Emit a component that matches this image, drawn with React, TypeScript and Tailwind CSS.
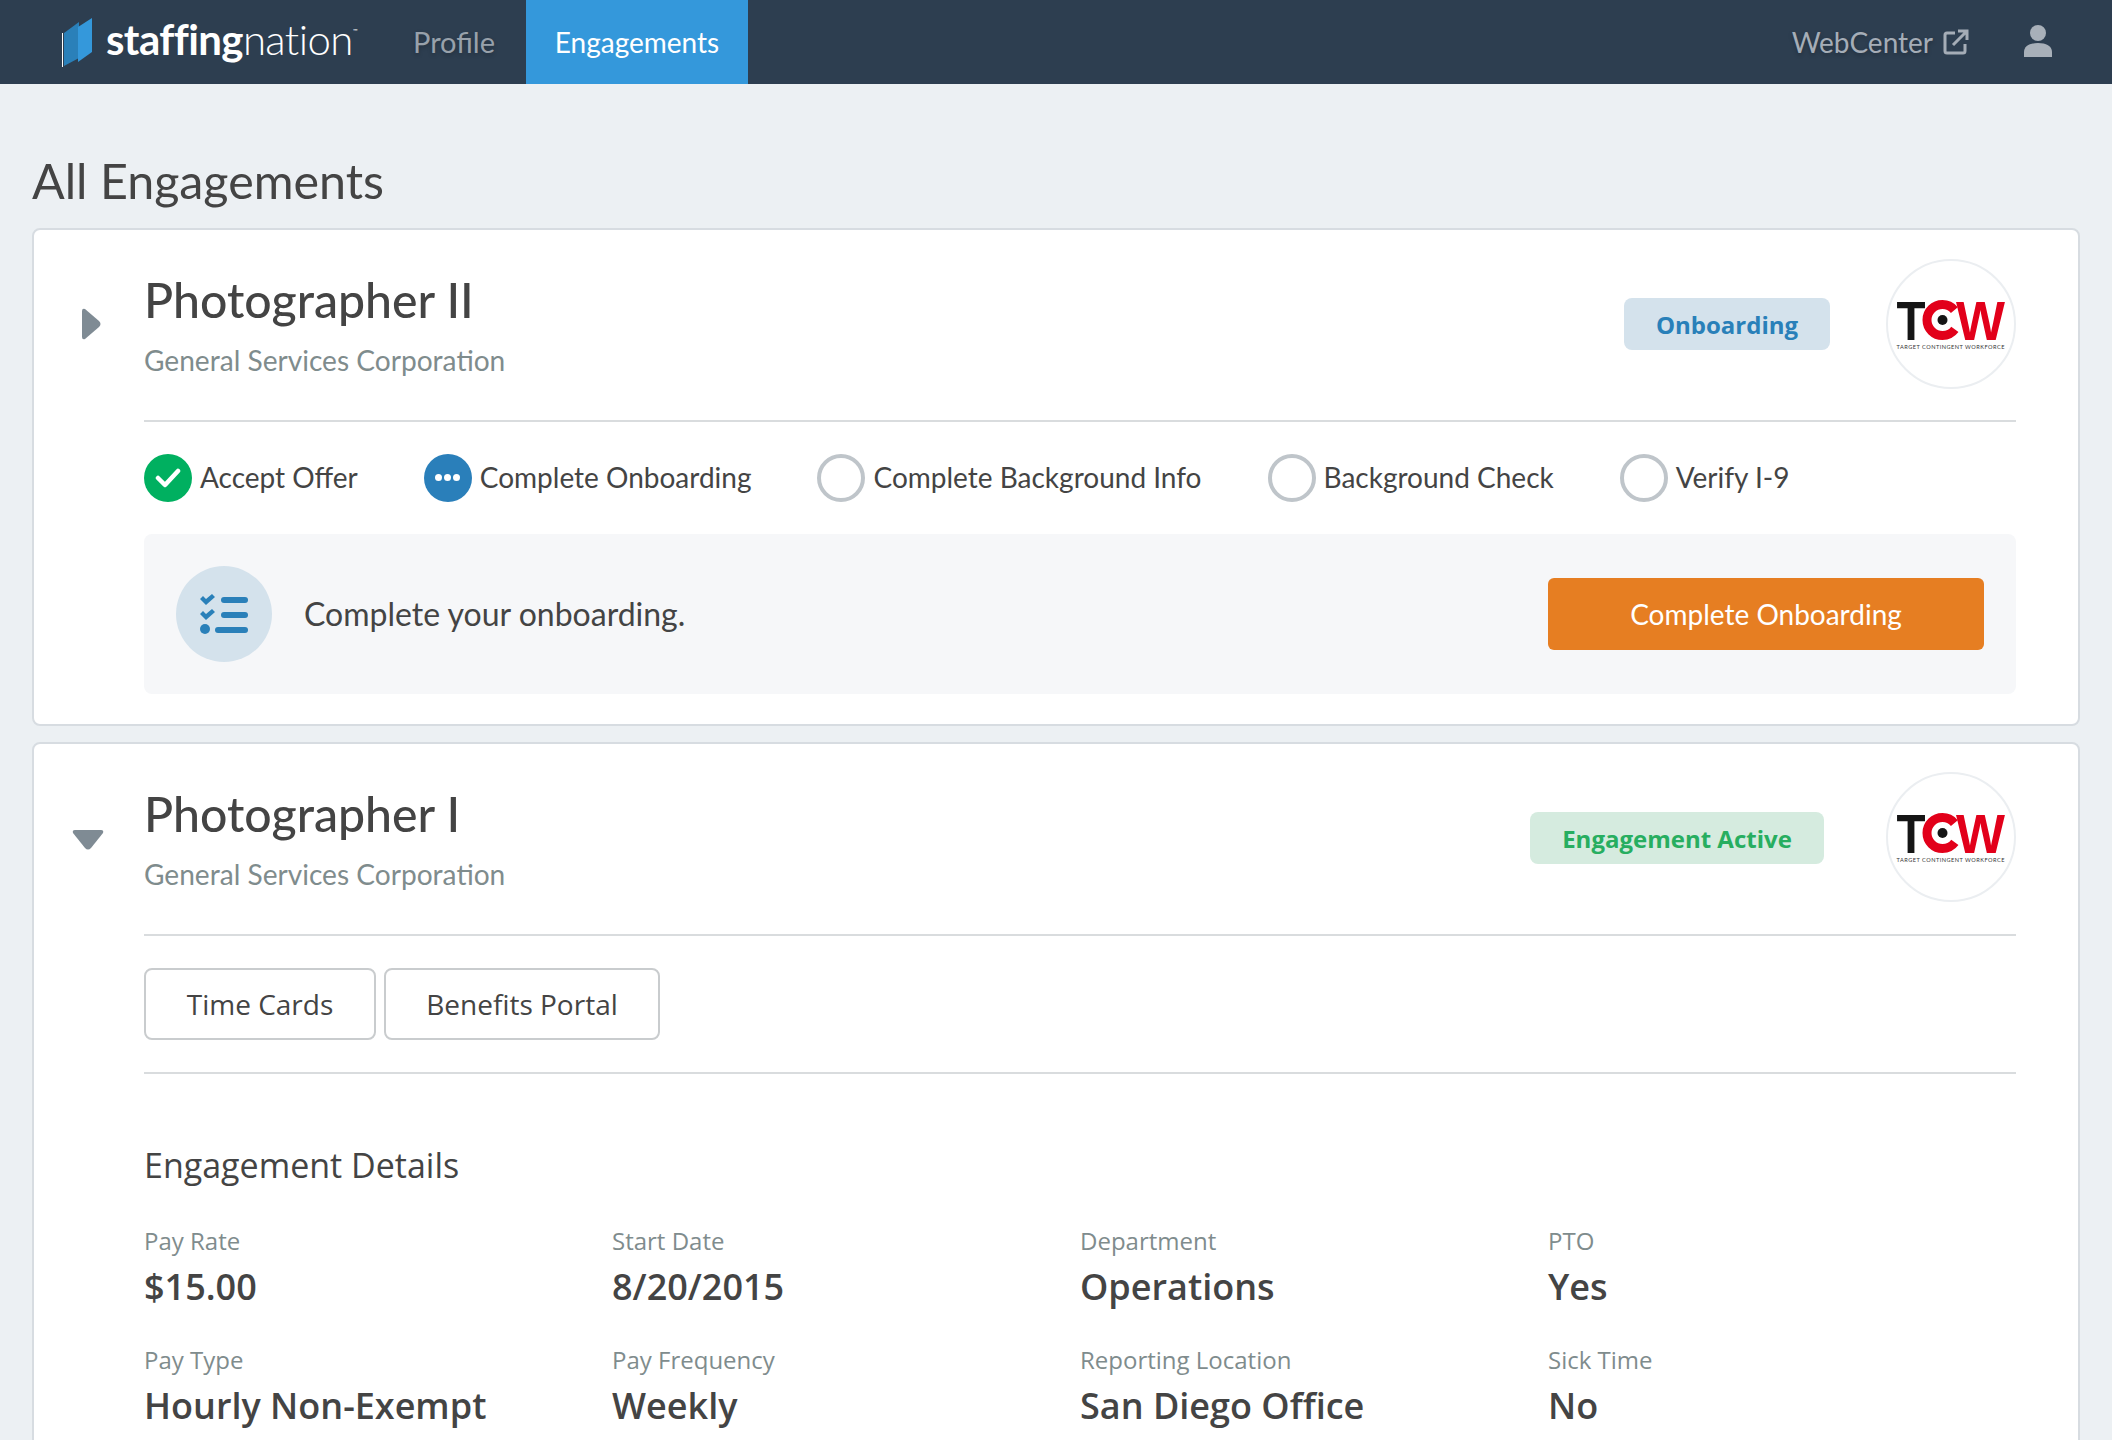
import React from "react";

const LATO = "font-['Lato',sans-serif]";
const OPEN = "font-['Open_Sans',sans-serif]";

function BrandMark() {
  return (
    <svg width="32" height="50" viewBox="0 0 32 50" className="shrink-0 mt-[2px]">
      <path d="M1.5 15 L1.5 49" stroke="#fff" strokeWidth="1" />
      <path d="M3 15 L18 4 L18 40 L3 48 Z" fill="#2a80b9" />
      <path d="M17 9 L31 0 L31 34 L17 44 Z" fill="#3498db" />
    </svg>
  );
}

function ExternalIcon() {
  return (
    <svg width="26" height="26" viewBox="0 0 26 26" fill="none" stroke="#a5adb7" strokeWidth="3">
      <path d="M12 4 H4 Q2 4 2 6 V22 Q2 24 4 24 H20 Q22 24 22 22 V15" />
      <path d="M10 16 L23 3 M15 2 H24 V11" />
    </svg>
  );
}

function UserIcon() {
  return (
    <svg width="28" height="32" viewBox="0 0 28 32" fill="#a8b0b9">
      <circle cx="14" cy="8" r="8" />
      <path d="M0 32 V27 C0 21 6 18 14 18 C22 18 28 21 28 27 V32 Z" />
    </svg>
  );
}

function TcwLogo() {
  return (
    <div className="w-[130px] h-[130px] rounded-full border-2 border-[#ebeef1] bg-white shrink-0 flex items-center justify-center">
      <svg width="114" height="84" viewBox="0 -14 114 84">
        <text x="2.5" y="44" fontFamily="Liberation Sans" fontWeight="700" fontSize="55" fill="#151515" textLength="29" lengthAdjust="spacingAndGlyphs">T</text>
        <circle cx="48.5" cy="24" r="15.5" fill="none" stroke="#e2001a" strokeWidth="9" strokeDasharray="76 21.4" strokeDashoffset="-10" />
        <circle cx="48.5" cy="24" r="5" fill="#151515" />
        <text x="62" y="44" fontFamily="Liberation Sans" fontWeight="700" fontSize="55" fill="#e2001a" textLength="49" lengthAdjust="spacingAndGlyphs">W</text>
        <text x="2.5" y="53" fontFamily="Lato" fontSize="5.6" fill="#333" textLength="108">TARGET CONTINGENT WORKFORCE</text>
      </svg>
    </div>
  );
}

function StepIcon({ state }: { state: "done" | "current" | "todo" }) {
  if (state === "done") {
    return (
      <span className="w-12 h-12 rounded-full bg-[#00b060] flex items-center justify-center shrink-0">
        <svg width="26" height="22" viewBox="0 0 26 22" fill="none" stroke="#fff" strokeWidth="4.5" strokeLinecap="round" strokeLinejoin="round">
          <path d="M3 11 L10 18 L23 4" />
        </svg>
      </span>
    );
  }
  if (state === "current") {
    return (
      <span className="w-12 h-12 rounded-full bg-[#2a7fba] flex items-center justify-center gap-[2px] shrink-0">
        <i className="w-[7px] h-[7px] rounded-full bg-white" />
        <i className="w-[7px] h-[7px] rounded-full bg-white" />
        <i className="w-[7px] h-[7px] rounded-full bg-white" />
      </span>
    );
  }
  return <span className="w-12 h-12 rounded-full border-4 border-[#bfc5ca] shrink-0" />;
}

function ChecklistIcon() {
  return (
    <svg width="48" height="40" viewBox="0 0 48 40" fill="#2a80b9">
      <path d="M0 5 L3 2 L6 5 L12 0 L15 3 L6 11 Z" />
      <rect x="21" y="3" width="27" height="6" rx="3" />
      <path d="M0 20 L3 17 L6 20 L12 15 L15 18 L6 26 Z" />
      <rect x="21" y="18" width="27" height="6" rx="3" />
      <circle cx="5" cy="35" r="5" />
      <rect x="15" y="33" width="33" height="6" rx="3" />
    </svg>
  );
}

function Detail({ label, value }: { label: string; value: string }) {
  return (
    <div className={OPEN}>
      <div className="text-[24px] leading-[32px] text-[#7f8c8d]">{label}</div>
      <div className="text-[36px] leading-[48px] font-semibold text-[#444] mt-[6px]">{value}</div>
    </div>
  );
}

const steps: { label: string; state: "done" | "current" | "todo" }[] = [
  { label: "Accept Offer", state: "done" },
  { label: "Complete Onboarding", state: "current" },
  { label: "Complete Background Info", state: "todo" },
  { label: "Background Check", state: "todo" },
  { label: "Verify I-9", state: "todo" },
];

const details = [
  ["Pay Rate", "$15.00"],
  ["Start Date", "8/20/2015"],
  ["Department", "Operations"],
  ["PTO", "Yes"],
  ["Pay Type", "Hourly Non-Exempt"],
  ["Pay Frequency", "Weekly"],
  ["Reporting Location", "San Diego Office"],
  ["Sick Time", "No"],
];

export default function App() {
  return (
    <div className="h-[1440px] overflow-hidden bg-[#ecf0f3]">
      <header className="h-[84px] bg-[#2d3e50] flex items-stretch pl-[61px] pr-[60px]">
        <div className="flex items-center w-[352px]">
          <BrandMark />
          <span className={`${LATO} ml-[13px] text-[42px] leading-none text-white tracking-[-0.6px] mb-[6px] whitespace-nowrap`}>
            <span className="font-bold">staffing</span>
            <span className="font-light">nation</span>
            <span className="text-[6px] font-normal tracking-normal align-[22px]">™</span>
          </span>
        </div>
        <a className={`${LATO} flex items-center text-[29px] text-[#98a1ab] [text-shadow:0_2px_4px_rgba(0,0,0,0.25)]`}>Profile</a>
        <a className={`${LATO} ml-[31px] w-[222px] flex items-center justify-center bg-[#3498db] text-[28px] text-white`}>Engagements</a>
        <div className="ml-auto flex items-center">
          <span className={`${LATO} text-[28px] text-[#a5adb7] [text-shadow:0_2px_4px_rgba(0,0,0,0.25)]`}>WebCenter</span>
          <span className="ml-[10px]"><ExternalIcon /></span>
          <span className="ml-[55px] mb-[2px]"><UserIcon /></span>
        </div>
      </header>

      <main className="px-8">
        <h1 className={`${LATO} text-[48.4px] leading-[60px] text-[#444] pt-[66px] h-[144px]`}>All Engagements</h1>

        <section className="bg-white rounded-lg border-2 border-[#d7dce1] h-[498px] flex">
          <div className="w-[110px] shrink-0 pl-[46px] pt-[78px]">
            <svg width="22" height="32" viewBox="0 0 22 32" fill="#7f8b94">
              <path d="M2 3 Q2 0 5 1 L19 13 Q22 16 19 19 L5 31 Q2 32 2 29 Z" />
            </svg>
          </div>
          <div className="flex-1 pr-[62px]">
            <div className="flex items-center h-[192px] border-b-2 border-[#d9dcde] pb-[32px] pt-[30px]">
              <div className="flex-1 mb-[2px]">
                <h2 className={`${LATO} text-[48.2px] leading-[60px] font-medium text-[#444]`}>Photographer II</h2>
                <p className={`${LATO} text-[28.1px] leading-[36px] text-[#7f8c8d] mt-[13px]`}>General Services Corporation</p>
              </div>
              <span className={`${OPEN} h-[52px] w-[206px] rounded-lg bg-[#d4e2ec] text-[#2980b9] text-[24px] font-bold flex items-center justify-center mr-[56px]`}><span className="mt-[2px]">Onboarding</span></span>
              <TcwLogo />
            </div>
            <div className="flex items-center gap-[66px] h-[112px] pb-[1px]">
              {steps.map((s) => (
                <div key={s.label} className="flex items-center gap-2">
                  <StepIcon state={s.state} />
                  <span className={`${LATO} text-[28px] text-[#444] mb-[1px]`}>{s.label}</span>
                </div>
              ))}
            </div>
            <div className="h-[160px] bg-[#f6f7f9] rounded-lg flex items-center px-8">
              <span className="w-24 h-24 rounded-full bg-[#d4e2ec] flex items-center justify-center shrink-0"><ChecklistIcon /></span>
              <p className={`${LATO} text-[32px] text-[#444] ml-8 flex-1`}>Complete your onboarding.</p>
              <button className={`${LATO} w-[436px] h-[72px] rounded-md bg-[#e67e22] text-white text-[28px]`}>Complete Onboarding</button>
            </div>
          </div>
        </section>

        <section className="bg-white rounded-lg border-2 border-[#d7dce1] mt-[16px] h-[800px] flex">
          <div className="w-[110px] shrink-0 pl-[38px] pt-[85px]">
            <svg width="32" height="22" viewBox="0 0 32 22" fill="#7f8b94">
              <path d="M3 1 H29 Q32 1 31 4 L19 19 Q16 22 13 19 L1 4 Q0 1 3 1 Z" />
            </svg>
          </div>
          <div className="flex-1 pr-[62px]">
            <div className="flex items-center h-[192px] border-b-2 border-[#d9dcde] pb-[32px] pt-[28px]">
              <div className="flex-1">
                <h2 className={`${LATO} text-[48.2px] leading-[60px] font-medium text-[#444]`}>Photographer I</h2>
                <p className={`${LATO} text-[28.1px] leading-[36px] text-[#7f8c8d] mt-[13px]`}>General Services Corporation</p>
              </div>
              <span className={`${OPEN} h-[52px] w-[294px] mt-[2px] rounded-lg bg-[#d5ebdf] text-[#27ae60] text-[24px] font-bold flex items-center justify-center mr-[62px]`}><span className="mt-[2px]">Engagement Active</span></span>
              <TcwLogo />
            </div>
            <div className="flex items-center gap-2 h-[138px] border-b-2 border-[#d9dcde]">
              <button className={`${OPEN} w-[232px] h-[72px] rounded-lg border-2 border-[#c9ccce] text-[28px] text-[#444]`}>Time Cards</button>
              <button className={`${OPEN} w-[276px] h-[72px] rounded-lg border-2 border-[#c9ccce] text-[28px] text-[#444]`}>Benefits Portal</button>
            </div>
            <h3 className={`${OPEN} text-[34px] leading-[44px] text-[#444] mt-[69px]`}>Engagement Details</h3>
            <div className="grid grid-cols-4 w-[1872px] gap-y-[33px] mt-[38px]">
              {details.map(([label, value]) => (
                <Detail key={label} label={label} value={value} />
              ))}
            </div>
          </div>
        </section>
      </main>
    </div>
  );
}
